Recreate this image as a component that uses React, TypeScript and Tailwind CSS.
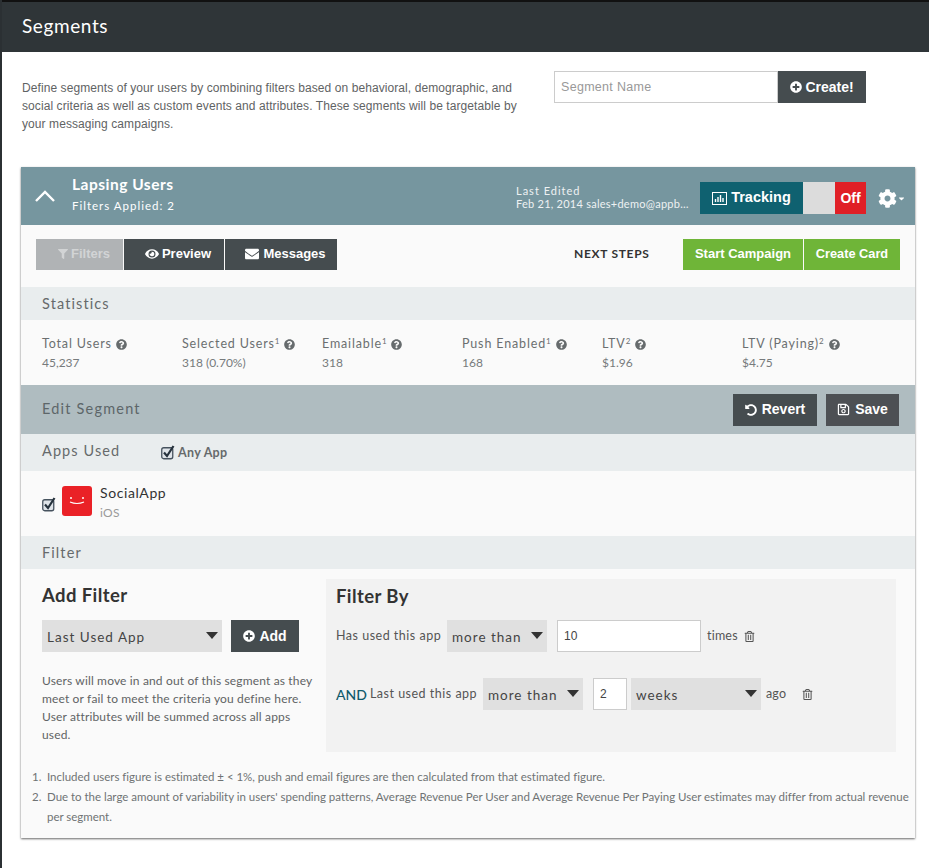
import React from 'react'
import { FaEnvelope, FaEye, FaFilter, FaPlusCircle, FaQuestionCircle, FaRegTrashAlt, FaCog, FaRegSave, FaUndoAlt, FaCaretDown } from 'react-icons/fa'

const lato = "font-['Lato','sans-serif']"
const helv = "font-['Liberation_Sans','sans-serif']"

function Stat({ label, sup, value, width }: { label: string; sup?: string; value: string; width: string }) {
  return (
    <div className={width}>
      <div className="flex items-center text-[12.5px] leading-4 tracking-[0.85px] text-[#6b6f70]">
        <span>{label}{sup && <sup className="text-[8px] leading-none">{sup}</sup>}</span>
        <FaQuestionCircle className="ml-[4px] text-[11px] text-[#666b6d]" />
      </div>
      <div className="mt-[3px] text-[12px] leading-4 text-[#777b7c]">{value}</div>
    </div>
  )
}

function SectionBar({ children, className }: { children: React.ReactNode; className: string }) {
  return <div className={`flex items-center bg-[#e9edee] pl-[21px] text-[14.5px] tracking-[1.1px] text-[#666a6b] ${className}`}>{children}</div>
}

function Dropdown({ label, width }: { label: string; width: string }) {
  return (
    <div className={`flex h-8 items-center justify-between bg-[#e0e0e0] pl-[5px] pr-[3px] text-[13.5px] tracking-[1px] text-[#444] ${width}`}>
      <span className="mt-[2px]">{label}</span>
      <svg width="14" height="7" viewBox="0 0 14 7" className="-mt-[2px]">
        <path d="M1 0H13L7 7Z" fill="#333" />
      </svg>
    </div>
  )
}

function Check() {
  return (
    <svg width="14" height="15" viewBox="0 0 14 15" fill="none" className="flex-none">
      <rect x="0.75" y="2.75" width="11" height="11" rx="2" fill="#dfe4e9" stroke="#46525e" strokeWidth="1.3" />
      <path d="M3 7.500L6 11L12.500 1" stroke="#26323d" strokeWidth="2.2" />
    </svg>
  )
}

export default function App() {
  return (
    <div className={`h-[868px] overflow-hidden border-l-2 border-[#2b3033] bg-white ${lato}`}>
      <header className="flex h-[52px] items-center border-t-2 border-[#111] bg-[#2f3538] pb-[2px] pl-[20px] text-[19px] tracking-[0.6px] text-white">
        Segments
      </header>

      <div className="flex h-[115px] items-start pl-[20px]">
        <p className={`mt-[27px] w-[510px] text-[12px] leading-[18px] tracking-[0.08px] text-[#5f6364] ${helv}`}>
          Define segments of your users by combining filters based on behavioral, demographic, and social criteria as well as custom events and attributes. These segments will be targetable by your messaging campaigns.
        </p>
        <div className={`ml-[22px] mt-[19px] flex h-8 ${helv}`}>
          <div className="flex w-[224px] items-center border border-[#ccc] pl-[6px] text-[12.5px] tracking-[0.3px] text-[#999]">Segment Name</div>
          <button className="flex w-[88px] items-center justify-center gap-[3px] bg-[#454c4f] text-[14px] font-bold text-white">
            <FaPlusCircle className="text-[12px]" /> Create!
          </button>
        </div>
      </div>

      <main className="ml-[19px] w-[894px] bg-[#fafafa] shadow-[0_1px_2px_rgba(0,0,0,0.6)]">
        <div className="flex h-[58px] items-center bg-[#76969f] text-white">
          <svg width="20" height="12" viewBox="0 0 20 12" className="ml-[14px]" fill="none" stroke="white" strokeWidth="2.4">
            <path d="M1 11 L10 2 L19 11" />
          </svg>
          <div className="-mt-[5px] ml-[17px] w-[444px]">
            <div className="text-[15.5px] font-bold leading-5 tracking-[0.5px]">Lapsing Users</div>
            <div className="mt-[4px] text-[11.5px] leading-4 tracking-[1px]">Filters Applied: 2</div>
          </div>
          <div className="mt-[2px] w-[184px] text-[#eef2f3]">
            <div className="text-[11px] leading-[13px] tracking-[1px]">Last Edited</div>
            <div className="whitespace-nowrap text-[11px] leading-[13px] tracking-[0.25px]">Feb 21, 2014 sales+demo@appb…</div>
          </div>
          <div className={`mt-[4px] flex h-8 ${helv}`}>
            <div className="flex w-[103px] items-center justify-center gap-[4px] bg-[#0f6170] text-[14.5px] font-bold">
              <svg width="15" height="13" viewBox="0 0 15 13" fill="none" stroke="white">
                <rect x="0.5" y="0.5" width="14" height="12" />
                <path d="M3.5 10V7M6 10V5M8.500 10V3M11 10V6" strokeWidth="1.4" />
              </svg>
              Tracking
            </div>
            <div className="w-8 bg-[#dcdcdc]" />
            <div className="flex w-[31px] items-center justify-center bg-[#e01f26] text-[14px] font-bold">Off</div>
          </div>
          <FaCog className="ml-[12px] mt-[4px] text-[19px]" />
          <FaCaretDown className="mt-[4px] text-[9px]" />
        </div>

        <div className={`flex h-[62px] items-center pb-[4px] pl-[15px] pr-[15px] text-[13px] font-bold text-white ${helv}`}>
          <div className="flex h-[31px] w-[87px] items-center justify-center gap-[3px] bg-[#b0b3b5] pl-[9px] text-[#d2d4d5]">
            <FaFilter className="text-[10px]" /> Filters
          </div>
          <div className="ml-px flex h-[31px] w-[100px] items-center justify-center gap-[3px] bg-[#454c4f] pl-[8px]">
            <FaEye className="text-[14px]" /> Preview
          </div>
          <div className="ml-px flex h-[31px] w-[112px] items-center justify-center gap-[4px] bg-[#454c4f] pl-[9px]">
            <FaEnvelope className="text-[14px]" /> Messages
          </div>
          <div className={`ml-[237px] w-[109px] text-[12px] tracking-[0.7px] text-[#333] ${lato}`}>NEXT STEPS</div>
          <div className="flex h-[31px] w-[120px] items-center justify-center bg-[#6fb538]">Start Campaign</div>
          <div className="ml-px flex h-[31px] w-[96px] items-center justify-center bg-[#6fb538] text-[12.75px]">Create Card</div>
        </div>

        <SectionBar className="h-[33px]">Statistics</SectionBar>

        <div className="flex h-[65px] items-start pl-[21px] pt-[16px]">
          <Stat label="Total Users" value="45,237" width="w-[140px]" />
          <Stat label="Selected Users" sup="1" value="318 (0.70%)" width="w-[140px]" />
          <Stat label="Emailable" sup="1" value="318" width="w-[140px]" />
          <Stat label="Push Enabled" sup="1" value="168" width="w-[140px]" />
          <Stat label="LTV" sup="2" value="$1.96" width="w-[140px]" />
          <Stat label="LTV (Paying)" sup="2" value="$4.75" width="w-[140px]" />
        </div>

        <div className="flex h-[49px] items-center justify-between bg-[#afbcc0] pl-[21px] pr-[16px]">
          <span className="-mt-[2px] text-[14.5px] tracking-[1.2px] text-[#5d6669]">Edit Segment</span>
          <div className={`flex gap-[9px] text-[14px] font-bold text-white ${helv}`}>
            <button className="flex h-8 w-[84px] items-center justify-center gap-[5px] bg-[#454c4f]"><FaUndoAlt className="text-[12px]" /> Revert</button>
            <button className="flex h-8 w-[73px] items-center justify-center gap-[5px] bg-[#4d5054]"><FaRegSave className="text-[13px]" /> Save</button>
          </div>
        </div>

        <SectionBar className="h-[37px]">
          <span className="-mt-[3px] w-[119px]">Apps Used</span>
          <Check />
          <span className="ml-[3px] mt-[2px] text-[12.5px] font-bold tracking-[0.3px]">Any App</span>
        </SectionBar>

        <div className="flex h-[65px] items-center pl-[21px]">
          <div className="mt-[2px]"><Check /></div>
          <div className="-mt-[5px] ml-[6px] flex h-[30px] w-[30px] items-center justify-center rounded-[3px] bg-[#ea2127]">
            <svg width="16" height="10" viewBox="0 0 16 10" fill="none" stroke="white">
              <circle cx="2" cy="2" r="1" fill="white" stroke="none" />
              <circle cx="14" cy="2" r="1" fill="white" stroke="none" />
              <path d="M1 6 Q8 9 15 6" strokeWidth="1.2" />
            </svg>
          </div>
          <div className="-mt-[2px] ml-[8px]">
            <div className="text-[14px] leading-[18px] tracking-[0.6px] text-[#333]">SocialApp</div>
            <div className="mt-[3px] text-[12px] leading-4 tracking-[0.3px] text-[#999]">iOS</div>
          </div>
        </div>

        <SectionBar className="h-[33px]">Filter</SectionBar>

        <div className="flex pl-[21px] pt-[10px]">
          <div className="w-[283px]">
            <h2 className="mt-[4px] text-[18.500px] font-bold leading-6 tracking-[0.4px] text-[#333]">Add Filter</h2>
            <div className="mt-[13px] flex items-center">
              <Dropdown label="Last Used App" width="w-[180px]" />
              <button className={`ml-[9px] flex h-8 w-[68px] items-center justify-center gap-[4px] bg-[#454c4f] text-[14px] font-bold text-white ${helv}`}>
                <FaPlusCircle className="text-[12px]" /> Add
              </button>
            </div>
            <p className="mt-[20px] w-[275px] text-[12px] leading-[18px] tracking-[0.15px] text-[#5f6364]">
              Users will move in and out of this segment as they meet or fail to meet the criteria you define here. User attributes will be summed across all apps used.
            </p>
          </div>
          <div className="ml-[1px] h-[173px] w-[570px] bg-[#f2f2f2] pl-[10px] text-[12.5px] text-[#555]">
            <h2 className="mt-[5px] text-[18.500px] font-bold leading-6 tracking-[0.4px] text-[#333]">Filter By</h2>
            <div className="mt-[12px] flex items-center">
              <span className="w-[111px] whitespace-nowrap tracking-[0.5px]">Has used this app</span>
              <Dropdown label="more than" width="w-[100px]" />
              <div className={`ml-[10px] flex h-8 w-[144px] items-center border border-[#ccc] bg-white pl-[6px] text-[12px] text-[#444] ${helv}`}>10</div>
              <span className="ml-[6px] tracking-[0.2px]">times</span>
              <FaRegTrashAlt className="ml-[6px] text-[11px]" />
            </div>
            <div className="mt-[26px] flex items-center">
              <span className="text-[14px] font-medium text-[#0f5a6b]">AND</span>
              <span className="ml-[3px] w-[113px] whitespace-nowrap tracking-[0.5px]">Last used this app</span>
              <Dropdown label="more than" width="w-[100px]" />
              <div className={`ml-[10px] flex h-8 w-[34px] items-center border border-[#ccc] bg-white pl-[6px] text-[12px] text-[#444] ${helv}`}>2</div>
              <Dropdown label="weeks" width="ml-[4px] w-[130px]" />
              <span className="ml-[5px] tracking-[0.2px]">ago</span>
              <FaRegTrashAlt className="ml-[16px] text-[11px]" />
            </div>
          </div>
        </div>

        <ol className="mt-[15px] pb-[11px] pl-[11px] text-[11.5px] leading-5 tracking-[-0.02px] text-[#6f7374]">
          <li className="flex"><span className="w-[15px] flex-none">1.</span><span>Included users figure is estimated ± &lt; 1%, push and email figures are then calculated from that estimated figure.</span></li>
          <li className="flex"><span className="w-[15px] flex-none">2.</span><span>Due to the large amount of variability in users' spending patterns, Average Revenue Per User and Average Revenue Per Paying User estimates may differ from actual revenue per segment.</span></li>
        </ol>
      </main>
    </div>
  )
}
